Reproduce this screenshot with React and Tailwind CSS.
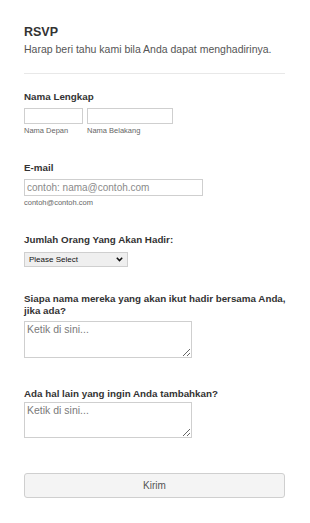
import React from "react";

function Label({ children, className = "" }) {
  return (
    <label className={`block text-[9.8px] leading-[12px] font-bold text-[#333] ${className}`}>
      {children}
    </label>
  );
}

export default function App() {
  return (
    <div
      className="w-[310px] min-h-[523px] bg-white px-[24px] pt-[25px] text-[#333]"
      style={{ fontFamily: "'Liberation Sans', Arial, sans-serif" }}
    >
      {/* Header */}
      <h1 className="text-[12.5px] leading-[15px] font-bold text-[#333]">RSVP</h1>
      <p className="mt-[3px] text-[10.5px] leading-[12px] text-[#555]">
        Harap beri tahu kami bila Anda dapat menghadirinya.
      </p>
      <div className="mt-[18px] w-[261px] border-t border-[#e8e8e8]" />

      {/* Full name */}
      <Label className="mt-[17px]">Nama Lengkap</Label>
      <div className="mt-[5px] flex gap-[4px]">
        <div className="flex flex-col">
          <input className="w-[59px] h-[16px] border border-[#cfcfcf] bg-white outline-none" />
          <span className="mt-[2px] text-[7.5px] leading-[9px] text-[#666]">Nama Depan</span>
        </div>
        <div className="flex flex-col">
          <input className="w-[86px] h-[16px] border border-[#cfcfcf] bg-white outline-none" />
          <span className="mt-[2px] text-[7.5px] leading-[9px] text-[#666]">Nama Belakang</span>
        </div>
      </div>

      {/* Email */}
      <Label className="mt-[27px]">E-mail</Label>
      <input
        placeholder="contoh: nama@contoh.com"
        className="mt-[5px] block w-[179px] h-[17px] border border-[#cfcfcf] bg-white px-[2px] text-[10px] outline-none placeholder:text-[#8a8a8a]"
      />
      <span className="block mt-[2px] text-[7.5px] leading-[9px] text-[#666]">contoh@contoh.com</span>

      {/* Count */}
      <Label className="mt-[27px]">Jumlah Orang Yang Akan Hadir:</Label>
      <div className="relative mt-[6px] w-[104px] h-[15px]">
        <select className="block appearance-none w-[104px] h-[15px] rounded-none border border-[#cfcfcf] bg-[#efefef] py-0 pl-[4px] text-[8px] leading-[13px] text-[#111] outline-none">
          <option>Please Select</option>
        </select>
        <svg
          className="pointer-events-none absolute right-[5px] top-[5px]"
          width="7"
          height="5"
          viewBox="0 0 7 5"
        >
          <path d="M0.8 0.8 L3.5 3.6 L6.2 0.8" fill="none" stroke="#111" strokeWidth="1.5" />
        </svg>
      </div>

      {/* Guests */}
      <Label className="mt-[26px] w-[266px] leading-[11.5px]">
        Siapa nama mereka yang akan ikut hadir bersama Anda, jika ada?
      </Label>
      <textarea
        placeholder="Ketik di sini..."
        className="mt-[4px] block w-[168px] h-[37px] border border-[#cfcfcf] bg-white px-[2px] py-[1px] text-[10.5px] leading-[12px] outline-none placeholder:text-[#7a7a7a]"
      />

      {/* Other */}
      <Label className="mt-[30px]">Ada hal lain yang ingin Anda tambahkan?</Label>
      <textarea
        placeholder="Ketik di sini..."
        className="mt-[2px] block w-[168px] h-[36px] border border-[#cfcfcf] bg-white px-[2px] py-[1px] text-[10.5px] leading-[12px] outline-none placeholder:text-[#7a7a7a]"
      />

      {/* Submit */}
      <button className="mt-[35px] block w-[261px] h-[25px] rounded-[3px] border border-[#cfcfcf] bg-[#f4f4f4] text-[10px] text-[#555]">
        Kirim
      </button>
    </div>
  );
}
